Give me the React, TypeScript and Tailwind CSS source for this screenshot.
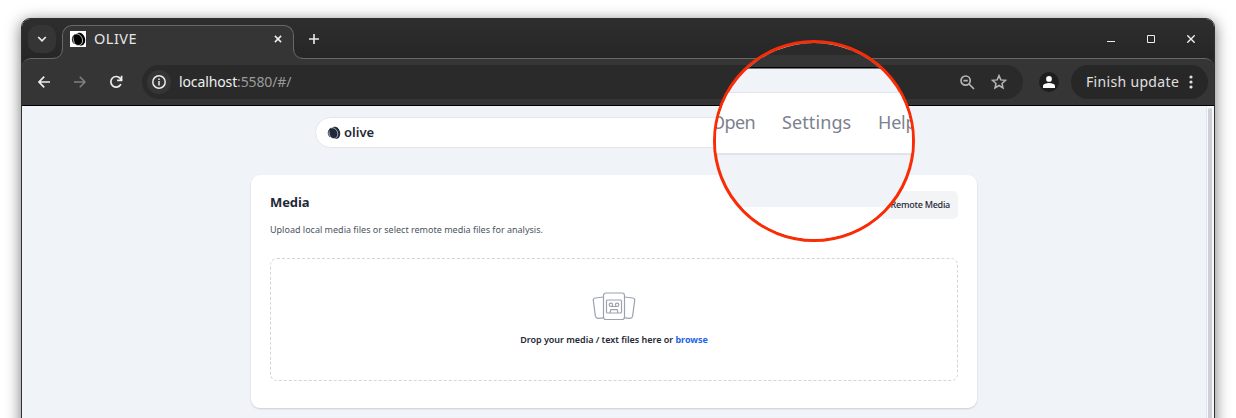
import React from "react";

function OliveMark({ className, light }: { className: string; light: string }) {
  return (
    <svg className={className} viewBox="0 0 16 16" fill="none">
      <ellipse cx="9.8" cy="7.7" rx="5.2" ry="7" transform="rotate(-14 9.8 7.7)" fill="currentColor" />
      <ellipse cx="6.9" cy="8.2" rx="5.2" ry="6.4" transform="rotate(-25 6.9 8.2)" fill="currentColor" stroke={light} strokeWidth="0.7" />
      <path d="M3.4 4.2C1.6 7 2.2 10.8 4.6 12.8C3.2 10 2.8 7 3.4 4.2Z" fill={light} opacity="0.7" />
      <path d="M4.5 2.6C1 4.6 .3 9.5 3.4 12.5" stroke="currentColor" strokeWidth="0.9" />
    </svg>
  );
}

function TabStrip() {
  return (
    <div className="flex h-[39px] bg-linear-to-b from-[#2e2e2e] to-[#262626]">
      <div className="ml-[6px] mt-[6px] flex size-7 items-center justify-center rounded-[10px] bg-[#353535]">
        <svg className="size-[10px]" viewBox="0 0 10 10" fill="none" stroke="#ececec" strokeWidth="1.7">
          <path d="M1.2 3L5 6.8L8.8 3" />
        </svg>
      </div>
      <svg className="z-20 -ml-[4px] -mr-px mt-[29px] h-[11px] w-[11px] shrink-0" viewBox="0 0 11 11">
        <path d="M0 10.5Q10.5 10.5 10.5 0H11V11H0Z" fill="#353535" />
        <path d="M0 10.5Q10.5 10.5 10.5 0" fill="none" stroke="#686868" />
      </svg>
      <div className="z-10 mt-[6px] flex h-[34px] w-[232px] shrink-0 items-start rounded-t-[10px] border border-b-0 border-[#686868] bg-[#353535] pl-[7px] pt-[5px]">
        <span className="flex size-4 items-center justify-center bg-white text-black">
          <OliveMark className="size-[15px]" light="#ffffff" />
        </span>
        <span className="-mt-px ml-[8px] text-[14.5px] leading-[17px] tracking-[0.5px] text-[#e6e6e6]">OLIVE</span>
        <svg className="ml-auto mr-[11px] mt-[4px] size-[8px]" viewBox="0 0 9 9" stroke="#ececec" strokeWidth="1.8">
          <path d="M1 1L8 8M8 1L1 8" />
        </svg>
      </div>
      <svg className="z-20 -ml-px mt-[29px] h-[11px] w-[11px] shrink-0" viewBox="0 0 11 11">
        <path d="M.5 0Q.5 10.5 11 10.5V11H0V0Z" fill="#353535" />
        <path d="M.5 0Q.5 10.5 11 10.5" fill="none" stroke="#686868" />
      </svg>
      <svg className="ml-[5px] mt-[15px] size-[10px]" viewBox="0 0 10 10" stroke="#ececec" strokeWidth="1.6">
        <path d="M5 0V10M0 5H10" />
      </svg>
      <div className="ml-auto mr-[19px] mt-[16px] flex items-start">
        <svg className="h-[9px] w-[8px]" viewBox="0 0 8 9" fill="none" stroke="#ececec">
          <path d="M0 6.5H8" />
        </svg>
        <svg className="ml-[32px] size-[8px]" viewBox="0 0 8 8" fill="none" stroke="#ececec">
          <path d="M.5 .5H7.5V7.5H.5Z" />
        </svg>
        <svg className="ml-[32px] size-[8px]" viewBox="0 0 8 8" fill="none" stroke="#ececec" strokeWidth="1.4">
          <path d="M.3 .3L7.7 7.7M7.7 .3L.3 7.7" />
        </svg>
      </div>
    </div>
  );
}

function Toolbar() {
  return (
    <div className="bg-[#272727]">
      <div className="flex h-[47px] items-center rounded-t-[9px] border-t border-[#686868] bg-[#353535]">
        <svg className="ml-[16px] size-[12px]" viewBox="0 0 12 12" fill="none" stroke="#ececec" strokeWidth="1.7">
          <path d="M12 6H1.2M6.2 .7L1 6L6.2 11.3" />
        </svg>
        <svg className="ml-[24px] size-[12px]" viewBox="0 0 12 12" fill="none" stroke="#808080" strokeWidth="1.6">
          <path d="M0 6H10.8M5.8 .7L11 6L5.8 11.3" />
        </svg>
        <svg className="ml-[23px] size-[14px]" viewBox="0 0 14 14" fill="none" stroke="#ececec" strokeWidth="1.7">
          <path d="M11.9 9.1A5.3 5.3 0 1 1 11.2 3.4L12.4 4.7M12.6 .8V5.3H8.1" />
        </svg>
        <div className="ml-[19px] flex h-[34px] w-[881px] items-center rounded-full bg-[#2a2a2a] pl-[5px] pr-[16px]">
          <span className="flex size-6 items-center justify-center rounded-full bg-[#353535]">
            <svg className="size-[14px]" viewBox="0 0 14 14" fill="none" stroke="#ececec" strokeWidth="1.5">
              <circle cx="7" cy="7" r="6.2" />
              <path d="M7 6V10.5M7 3.5V5" />
            </svg>
          </span>
          <span className="-mt-[2px] ml-[8px] text-[14px] tracking-[-0.12px] text-[#9a9a9a]">
            <span className="text-[#f0f0f0]">localhost</span>:5580/#/
          </span>
          <svg className="ml-auto size-[15px]" viewBox="0 0 15 15" fill="none" stroke="#b5b5b5" strokeWidth="1.7">
            <circle cx="5.6" cy="5.6" r="4.6" />
            <path d="M9 9L14 14M3.4 5.6H7.8" />
          </svg>
          <svg className="ml-[16px] size-4" viewBox="0 0 16 16" fill="none" stroke="#b5b5b5" strokeWidth="1.5">
            <path d="M8 1.6L9.8 5.9L14.5 6.3L11 9.4L12 14L8 11.5L4 14L5 9.4L1.5 6.3L6.2 5.9Z" />
          </svg>
        </div>
        <span className="ml-[16px] flex size-5 items-center justify-center rounded-full bg-[#1e1e1e]">
          <svg className="size-3" viewBox="0 0 12 12" fill="white">
            <circle cx="6" cy="2.9" r="2.9" />
            <path d="M0 12V10Q0 8.7 1.5 8Q6 6 10.5 8Q12 8.7 12 10V12Z" />
          </svg>
        </span>
        <div className="ml-[12px] flex h-[34px] w-[137px] items-center rounded-full bg-[#272727] pl-[15px]">
          <span className="-mt-[2px] whitespace-nowrap text-[14px] tracking-[0.33px] text-[#e0e0e0]">Finish update</span>
          <svg className="ml-auto mr-[15px] h-[14px] w-[4px] shrink-0" viewBox="0 0 4 14" fill="#e0e0e0">
            <circle cx="2" cy="2" r="1.6" />
            <circle cx="2" cy="7" r="1.6" />
            <circle cx="2" cy="12" r="1.6" />
          </svg>
        </div>
      </div>
    </div>
  );
}

function CassetteIcon() {
  return (
    <svg className="h-[29px] w-[44px]" viewBox="0 0 44 29" fill="none" stroke="#9ca3af" strokeWidth="1.2">
      <path d="M11.5 5L3.2 6Q1 6.4 1.3 8.4L3.4 24.2Q3.9 26.5 6.2 26.3L11.5 25.8" />
      <path d="M32.5 5L40.8 6Q43 6.4 42.7 8.4L40.6 24.2Q40.1 26.5 37.8 26.3L32.5 25.8" />
      <rect x="11.5" y="1" width="21" height="26.5" rx="2.5" />
      <rect x="14.5" y="8" width="15" height="13" rx="1" />
      <circle cx="18.9" cy="12.8" r="1.7" />
      <circle cx="25.1" cy="12.8" r="1.7" />
      <path d="M18.9 14.5H25.1M18 21L18.8 17.7H25.2L26 21" />
    </svg>
  );
}

function MediaCard() {
  return (
    <section className="ml-[229px] mt-[27px] h-[233px] w-[726px] rounded-[9px] bg-white px-[19px] pt-[16px] shadow-[0_1px_2px_rgba(0,0,0,0.16)]">
      <div className="flex h-[67px] justify-between">
        <div>
          <h1 className="text-[13px] font-bold leading-[22px] tracking-[-0.1px] text-[#1f2937]">Media</h1>
          <p className="mt-[10px] whitespace-nowrap text-[9px] leading-[14px] text-[#4b5563]">
            Upload local media files or select remote media files for analysis.
          </p>
        </div>
        <button className="h-[28px] w-[78px] whitespace-nowrap rounded-[5px] bg-[#f3f4f6] pr-[8px] text-right text-[9px] font-medium tracking-[-0.25px] text-[#1f2937]">
          Remote Media
        </button>
      </div>
      <div className="flex h-[123px] flex-col items-center rounded-[7px] border border-dashed border-[#d1d5db] pt-[33px]">
        <CassetteIcon />
        <p className="mt-[12px] whitespace-nowrap text-[9px] font-semibold leading-[14px] tracking-[-0.03px] text-[#1f2937]">
          Drop your media / text files here or <span className="font-bold text-[#2563eb]">browse</span>
        </p>
      </div>
    </section>
  );
}

function Magnifier() {
  return (
    <div className="absolute left-[713px] top-[40px] size-[202px] overflow-hidden rounded-full border-[3.5px] border-[#f92c06] bg-[#f0f3f8]">
      <div className="h-[12px] bg-[#2b2b2b]" />
      <div className="h-[12px] bg-[#353535]" />
      <div className="h-[2px] border-b border-[#777] bg-black" />
      <div className="h-[23px]" />
      <div className="flex h-[62px] items-center border-y border-[#e1e4ea] bg-white pb-px text-[18px] text-[#7b818e] shadow-[0_1px_1px_rgba(0,0,0,0.06)]">
        <span className="-ml-[5px] w-[71px] shrink-0 tracking-[-0.6px]">Open</span>
        <span className="w-[96px] shrink-0 tracking-[0.1px]">Settings</span>
        <span className="shrink-0 tracking-[-0.2px]">Help</span>
      </div>
      <div className="h-[53px]" />
      <div className="h-[50px] bg-white" />
    </div>
  );
}

export default function App() {
  return (
    <div className="relative h-[418px] w-[1236px] overflow-hidden bg-white pl-[21px] pt-[18px] font-['Noto_Sans',sans-serif]">
      <div className="h-[440px] w-[1194px] overflow-hidden rounded-t-[9px] border border-[#303030] shadow-[0_3px_15px_rgba(0,0,0,0.55)]">
        <TabStrip />
        <Toolbar />
        <div className="flex h-[340px] border-t border-black bg-[#f0f3f8]">
          <main className="w-[1184px] shrink-0">
            <header className="ml-[293px] mt-[11px] flex h-[31px] w-[596px] items-center rounded-full border border-[#e2e5ea] bg-white pl-[11px] text-[#1f2937]">
              <OliveMark className="size-[14px]" light="#dfe3e9" />
              <span className="-mt-px ml-[3px] text-[13px] font-semibold leading-[20px]">olive</span>
            </header>
            <MediaCard />
          </main>
          <div className="flex w-[8px] shrink-0 border-l border-[#e2e6ec] bg-[#f6f8fb] pl-[1px] pt-[2px]">
            <div className="h-full w-[4px] rounded-t-full bg-[#cdd0d7]" />
          </div>
        </div>
      </div>
      <Magnifier />
    </div>
  );
}
